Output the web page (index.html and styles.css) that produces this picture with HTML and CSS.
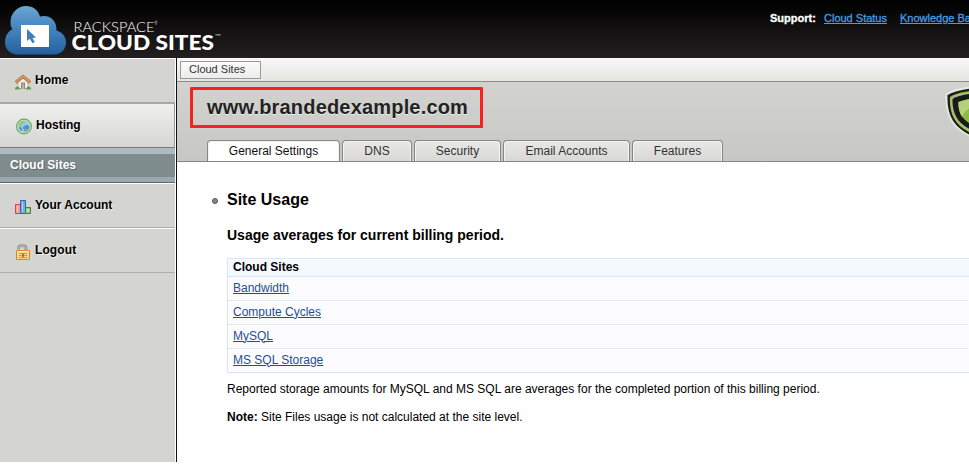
FILE: index.html
```
<!DOCTYPE html>
<html lang="en">
<head>
<meta charset="utf-8">
<title>Cloud Sites</title>
<link rel="stylesheet" href="styles.css">
</head>
<body>
<div class="page">
  <header class="header">
    <svg class="logo" width="230" height="58" viewBox="0 0 230 58">
      <defs>
        <linearGradient id="cloud" x1="0" y1="0" x2="0" y2="1"><stop offset="0" stop-color="#6ba6d2"/><stop offset=".45" stop-color="#4586c0"/><stop offset="1" stop-color="#255f9f"/></linearGradient>
      </defs>
      <path fill="url(#cloud)" d="M18 54.500C10 54.500 5 49 5 42.500C5 36 8 31.500 12.500 29C11 27.500 10.500 25.500 10.500 22C10.500 13 17.500 6 26 6C33 6 38 10 40 16.500C49 14 57 20 56.500 30.500C62 32 66 36.500 66 42.500C66 49.500 61 54.500 54 54.500Z"/>
      <path fill="#fff" d="M21 25H49V47H21Z"/>
      <path fill="#3d7ebb" d="M27 29V41L29.700 38.800L32.500 43.200L34.800 42L32.500 38L36 37.500Z"/>
      <text class="brand-top" x="73.500" y="32" textLength="81" lengthAdjust="spacingAndGlyphs">RACKSPACE</text>
      <text class="mark" x="154.500" y="25" textLength="3" lengthAdjust="spacingAndGlyphs">®</text>
      <text class="brand-main" x="71.500" y="50" textLength="142.500" lengthAdjust="spacingAndGlyphs">CLOUD SITES</text>
      <text class="mark" x="214.500" y="38" textLength="6" lengthAdjust="spacingAndGlyphs">™</text>
    </svg>
    <nav class="support"><b>Support:</b><a href="#">Cloud Status</a><a href="#">Knowledge Base</a></nav>
  </header>
  <div class="body">
    <nav class="side">
      <a class="item home" href="#">
        <svg width="16" height="16" viewBox="0 0 16 16"><path fill="#f1eee8" stroke="#aaa49a" stroke-width=".7" d="M3 7.500L8 3.500L13 7.500V14.500H3Z"/><path fill="#8a8782" d="M6 8.500H10V15H6Z"/><path fill="#b5b1aa" d="M7 9.500H9V15H7Z"/><path fill="none" stroke="#a86a3c" stroke-width="3.200" d="M.8 8.500L8 2.500L15.200 8.500"/><path fill="none" stroke="#d79a62" stroke-width="1.800" d="M1 8.300L8 2.400L15 8.300"/><path fill="#5b9e4c" d="M0 15.500Q0 12.500 2.500 12.500Q4.500 12.500 5 15.500ZM11 15.500Q11.500 12.500 13.500 12.500Q16 12.500 16 15.500Z"/></svg>
        <span>Home</span>
      </a>
      <a class="item hosting" href="#">
        <svg width="17" height="17" viewBox="0 0 17 17"><circle cx="8" cy="8.500" r="7.400" fill="#d2e8c4" stroke="#6ba45c" stroke-width="1.100"/><circle cx="8" cy="8.500" r="6" fill="#9dcbe4"/><path fill="#5595c8" d="M8 8Q11 6 13.500 8Q13.500 12 9.500 14Q7.500 14 8 11Q5.500 10 8 8ZM3 9L5.500 9.500L6.500 13Q3 12 3 9Z"/><path fill="#8cca78" d="M2.500 7Q4.500 2 9.500 3L8.500 5L6 6L5 9ZM9.500 11L11 11.500L10 13.500L8.500 13Z"/></svg>
        <span>Hosting</span>
      </a>
      <a class="sub" href="#">Cloud Sites</a>
      <a class="item account" href="#">
        <svg width="16" height="16" viewBox="0 0 16 16"><path fill="#f49a9a" stroke="#cf4850" d="M.5 5.500H5.500V14.500H.5Z"/><path fill="#ffd0cc" d="M2 7H3V13H2Z"/><path fill="#6fa9ea" stroke="#2f64b0" d="M5.500 1.500H10.500V14.500H5.500Z"/><path fill="#a8d0fa" d="M7 3H8V13H7Z"/><path fill="#8fc587" stroke="#3e8444" d="M10.500 8.500H15.500V14.500H10.500Z"/><path fill="#c4e6b9" d="M12 10H14V13H12Z"/></svg>
        <span>Your Account</span>
      </a>
      <a class="item logout" href="#">
        <svg width="14" height="17" viewBox="0 0 14 17"><path fill="none" stroke="#8e8e8e" stroke-width="2.800" d="M2.500 5.500V4.500Q2.500 1.700 6.500 1.700Q10 1.700 10 4.500V7"/><path fill="none" stroke="#c9c9c9" d="M2.500 5.500V4.500Q2.500 1.700 6.500 1.700Q10 1.700 10 4.500V7"/><path fill="#f8d582" stroke="#cf8a3c" d="M.5 6.500H13.500V15.500H.5Z"/><path stroke="#fff0bd" d="M1 7.500H13"/><path stroke="#d79a46" d="M3 9.500H11M3 11.500H11M3 13.500H11"/><path fill="#9a6428" d="M6.200 9.500H7.800V13H6.200Z"/></svg>
        <span>Logout</span>
      </a>
    </nav>
    <main class="main">
      <div class="crumbs"><a class="crumb" href="#">Cloud Sites</a></div>
      <section class="banner">
        <h1 class="domain">www.brandedexample.com</h1>
        <svg class="shield" width="24" height="52" viewBox="0 0 24 52">
          <path fill="#1d1f1c" stroke="#e6e6e4" stroke-width="2" d="M30 1C18 2 8 4 1.500 8.500C.5 30 8 44 30 52Z"/>
          <path fill="#9fc54d" d="M30 4.500C19 5.500 10 7.500 5 11C4 29 11 42 30 48.500Z"/>
          <path fill="#b4b6b1" d="M30 6.500C20 7 11 9 6.500 12C5.500 28 12 40 30 46.500Z"/>
          <path fill="#191b18" d="M30 7.500C20 8 12 10 7.500 13C7 28 13 39 30 45.500Z"/>
          <path fill="#8fbb43" d="M30 12.500C23 13 18 14 13.500 16C13 26 17 35 30 40Z"/>
          <path fill="#b4d07a" d="M30 12.500C23 13 18 14 13.500 16C13.300 22 14.500 27 17 31Q20 23 30 20Z"/>
        </svg>
        <div class="tabs">
          <a class="tab active" href="#">General Settings</a>
          <a class="tab dns" href="#">DNS</a>
          <a class="tab security" href="#">Security</a>
          <a class="tab email" href="#">Email Accounts</a>
          <a class="tab features" href="#">Features</a>
        </div>
      </section>
      <section class="content">
        <h2>Site Usage</h2>
        <h3>Usage averages for current billing period.</h3>
        <table class="usage">
          <thead><tr><th>Cloud Sites</th></tr></thead>
          <tbody>
            <tr><td><a href="#">Bandwidth</a></td></tr>
            <tr><td><a href="#">Compute Cycles</a></td></tr>
            <tr><td><a href="#">MySQL</a></td></tr>
            <tr><td><a href="#">MS SQL Storage</a></td></tr>
          </tbody>
        </table>
        <p class="reported">Reported storage amounts for MySQL and MS SQL are averages for the completed portion of this billing period.</p>
        <p><b>Note:</b> Site Files usage is not calculated at the site level.</p>
      </section>
    </main>
  </div>
</div>
</body>
</html>
```
FILE: styles.css
```
* { box-sizing: border-box; }
html, body { margin: 0; background: #fff; overflow: hidden; }
body { font: 12px/16px "Liberation Sans", Arial, sans-serif; color: #000; }
h1, h2, h3, p { margin: 0; }
.page { width: 969px; height: 462px; overflow: hidden; }
.header { display: flex; justify-content: space-between; height: 58px; background: linear-gradient(#000, #231f20); }
.logo { flex: none; }
.brand-top { font: 300 14px Lato, sans-serif; fill: #fff; }
.brand-main { font: 900 21.5px Lato, sans-serif; fill: #fff; }
.mark { font: 6px Lato, sans-serif; fill: #ccc; }
.support { display: flex; width: 199px; padding-top: 11px; font-size: 11px; line-height: 15px; white-space: nowrap; color: #fff; -webkit-text-stroke: .3px; }
.support b { width: 54px; flex: none; }
.support a { color: #429ee8; margin-right: 13px; text-underline-offset: 1px; }
.body { display: flex; height: 404px; }
.side { width: 177px; flex: none; background: #d4d5d0; border-right: 1px solid #111; box-shadow: inset -1px 0 #fff; padding-right: 1px; }
.item { display: flex; align-items: flex-start; height: 45px; padding-left: 15px; border-top: 1px solid #fff; border-bottom: 1px solid #adaeab; color: #000; text-decoration: none; font-weight: bold; text-shadow: 1px 1px #eeeeec; }
.item svg { margin-top: 15px; flex: none; }
.item span { margin: 13px 0 0 4px; }
.home { border-bottom-color: #a5a6a4; }
.hosting { padding-left: 16px; background: linear-gradient(#f0f0f0, #d5d6d1); border-right: 1px solid #999; border-bottom-color: #777b7b; border-top-color: #aaa; }
.hosting svg { margin-top: 14px; margin-right: -1px; }
.logout { padding-left: 16px; letter-spacing: .1px; }
.logout svg { margin-right: 1px; }
.sub { display: block; height: 35px; padding: 3px 10px 9px; border-top: 6px solid #aebabf; border-bottom: 1px solid #5f6668; box-shadow: inset 0 -5px #9ca8ad; background: #7e8c8e; color: #fff; text-decoration: none; font-weight: bold; text-shadow: 1px 1px 1px #59666a; }
.main { flex: 1; min-width: 0; }
.crumbs { height: 24px; padding: 3px; border-bottom: 1px solid #8b8d89; background: linear-gradient(#f8f8f8, #e4e6df); }
.crumb { display: block; width: 81px; height: 18px; padding-left: 8px; border: 1px solid #9a9a9a; background: linear-gradient(#fafafa, #ececec); font-size: 11px; line-height: 15px; color: #333; text-decoration: none; }
.banner { position: relative; height: 80px; padding: 5px 0 0 13px; border-bottom: 1px solid #858784; background: linear-gradient(#d2d3ce, #c7c8c3); overflow: hidden; }
.domain { width: 293px; height: 41px; padding-left: 14px; border: 3px solid #fb201b; border-radius: 1px; font-size: 20px; line-height: 34px; letter-spacing: .18px; color: #222; text-shadow: 0 1px #eee; white-space: nowrap; }
.shield { position: absolute; right: 0; top: 4px; }
.tabs { display: flex; gap: 2px; margin: 12px 0 0 17px; height: 22px; }
.tab { height: 21px; border: 1px solid #858784; border-bottom: 0; border-radius: 4px 4px 0 0; background: linear-gradient(#e8e8e6, #d8d9d5); box-shadow: inset 1px 1px #f4f4f4, inset -1px 0 #f4f4f4; color: #333; text-align: center; line-height: 20px; text-decoration: none; }
.active { width: 133px; height: 22px; background: #fff; color: #111; }
.dns { width: 70px; } .security { width: 87px; } .email { width: 127px; } .features { width: 91px; }
.content { padding: 28px 0 0 50px; }
h2 { display: flex; align-items: center; margin-left: -15px; font-size: 16px; line-height: 20px; }
h2::before { content: ""; width: 6px; height: 6px; margin: 2px 9px 0 0; border: 1px solid #555; border-radius: 50%; background: #888; box-sizing: border-box; }
h3 { margin-top: 15px; font-size: 14px; line-height: 20px; }
.usage { width: 760px; margin-top: 13px; border: 1px solid #d7e7f7; border-collapse: separate; border-spacing: 0; background: #fcfcff; }
.usage th { height: 18px; padding: 0 5px 1px; background: #f3f9ff; border-bottom: 1px solid #d7e7f7; box-shadow: inset 0 1px #fff; text-align: left; line-height: 16px; }
.usage td { height: 24px; padding: 0 5px 2px; border-bottom: 1px dotted #d4dfeb; line-height: 20px; }
.usage tr:last-child td { height: 23px; padding-bottom: 2px; border-bottom: 0; }
.usage a { color: #1f4f91; text-underline-offset: 1px; }
.reported { margin: 8px 0 12px; white-space: nowrap; }
```
